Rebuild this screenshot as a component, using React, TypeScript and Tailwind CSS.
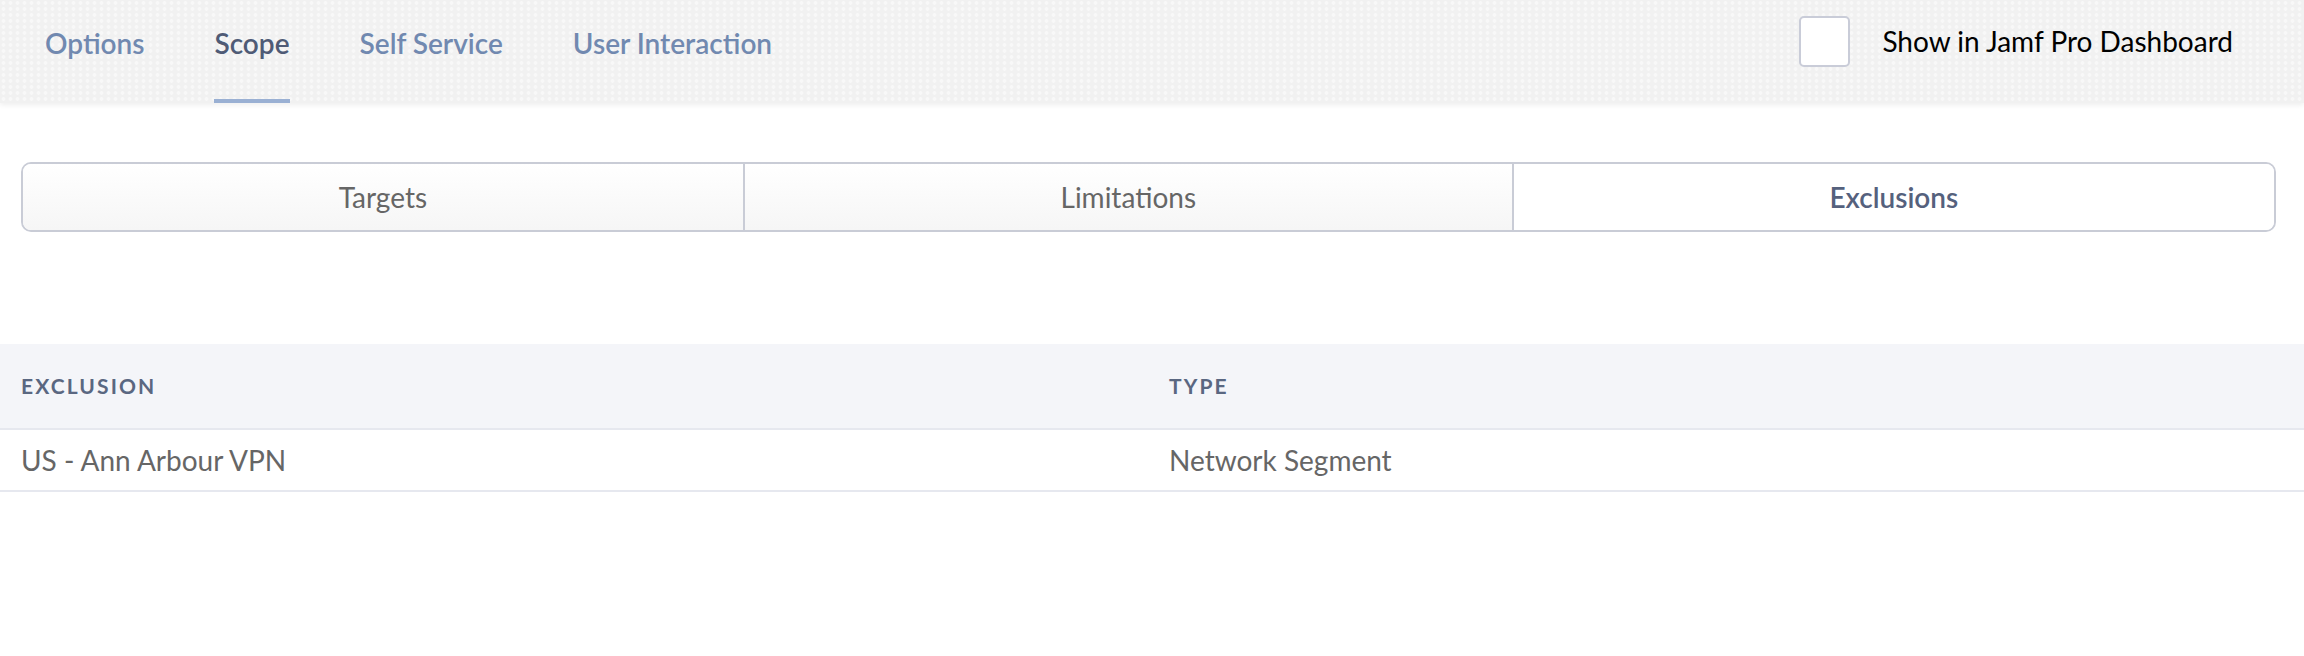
import React from "react";

const navItems = ["Options", "Scope", "Self Service", "User Interaction"];
const segments = ["Targets", "Limitations", "Exclusions"];

export default function App() {
  const active = "Scope";
  const activeSegment = "Exclusions";

  return (
    <div className="min-h-screen w-full bg-white font-['Lato','Noto_Sans',sans-serif]">
      {/* top tab bar */}
      <div className="relative flex h-[103px] items-stretch justify-between bg-[#f1f1f1] bg-[radial-gradient(circle,#f8f8f8_1.5px,transparent_2.2px)] bg-size-[7px_6px] px-[45px] shadow-[0_2px_5px_rgba(0,0,0,0.07)]">
        <nav className="flex gap-[70px]">
          {navItems.map(item => (
            <a
              key={item}
              className={`flex items-start border-b-4 pt-[23px] text-[28px] font-semibold leading-[40px] ${
                item === active ? "border-[#9ab0d3] text-[#4f5b76]" : "border-transparent text-[#7189b0]"
              }`}
            >
              {item}
            </a>
          ))}
        </nav>
        <label className="flex items-start gap-[32px] pt-[16px] pr-[26px]">
          <span className="h-[51px] w-[51px] rounded-[5px] border-2 border-[#c9ccd8] bg-white" />
          <span className="pt-[5px] text-[28px] leading-[40px] text-black">Show in Jamf Pro Dashboard</span>
        </label>
      </div>

      {/* segmented control */}
      <div className="pl-[21px] pr-[28px] pt-[59px]">
        <div className="flex h-[70px] overflow-hidden rounded-[10px] border-2 border-[#c9ccd6]">
          {segments.map((seg, i) => (
            <button
              key={seg}
              className={`flex flex-auto items-center justify-center text-[28px] ${
                i > 0 ? "border-l-2 border-[#c9ccd6]" : ""
              } ${
                seg === activeSegment
                  ? "bg-white font-semibold text-[#55617d]"
                  : "bg-gradient-to-b from-white to-[#f6f6f6] font-normal text-[#666666]"
              }`}
            >
              {seg}
            </button>
          ))}
        </div>
      </div>

      {/* exclusions table */}
      <div className="mt-[112px]">
        <div className="flex h-[86px] items-center border-b-2 border-[#e6e8ef] bg-[#f4f5f9]">
          <div className="w-[1169px] pl-[21px] text-[21px] font-bold tracking-[0.1em] text-[#5a6781]">EXCLUSION</div>
          <div className="text-[21px] font-bold tracking-[0.1em] text-[#5a6781]">TYPE</div>
        </div>
        <div className="flex h-[62px] items-center border-b-2 border-[#e6e8ef]">
          <div className="w-[1169px] pl-[21px] text-[28px] font-normal text-[#666666]">US - Ann Arbour VPN</div>
          <div className="text-[28px] font-normal text-[#666666]">Network Segment</div>
        </div>
      </div>
    </div>
  );
}
